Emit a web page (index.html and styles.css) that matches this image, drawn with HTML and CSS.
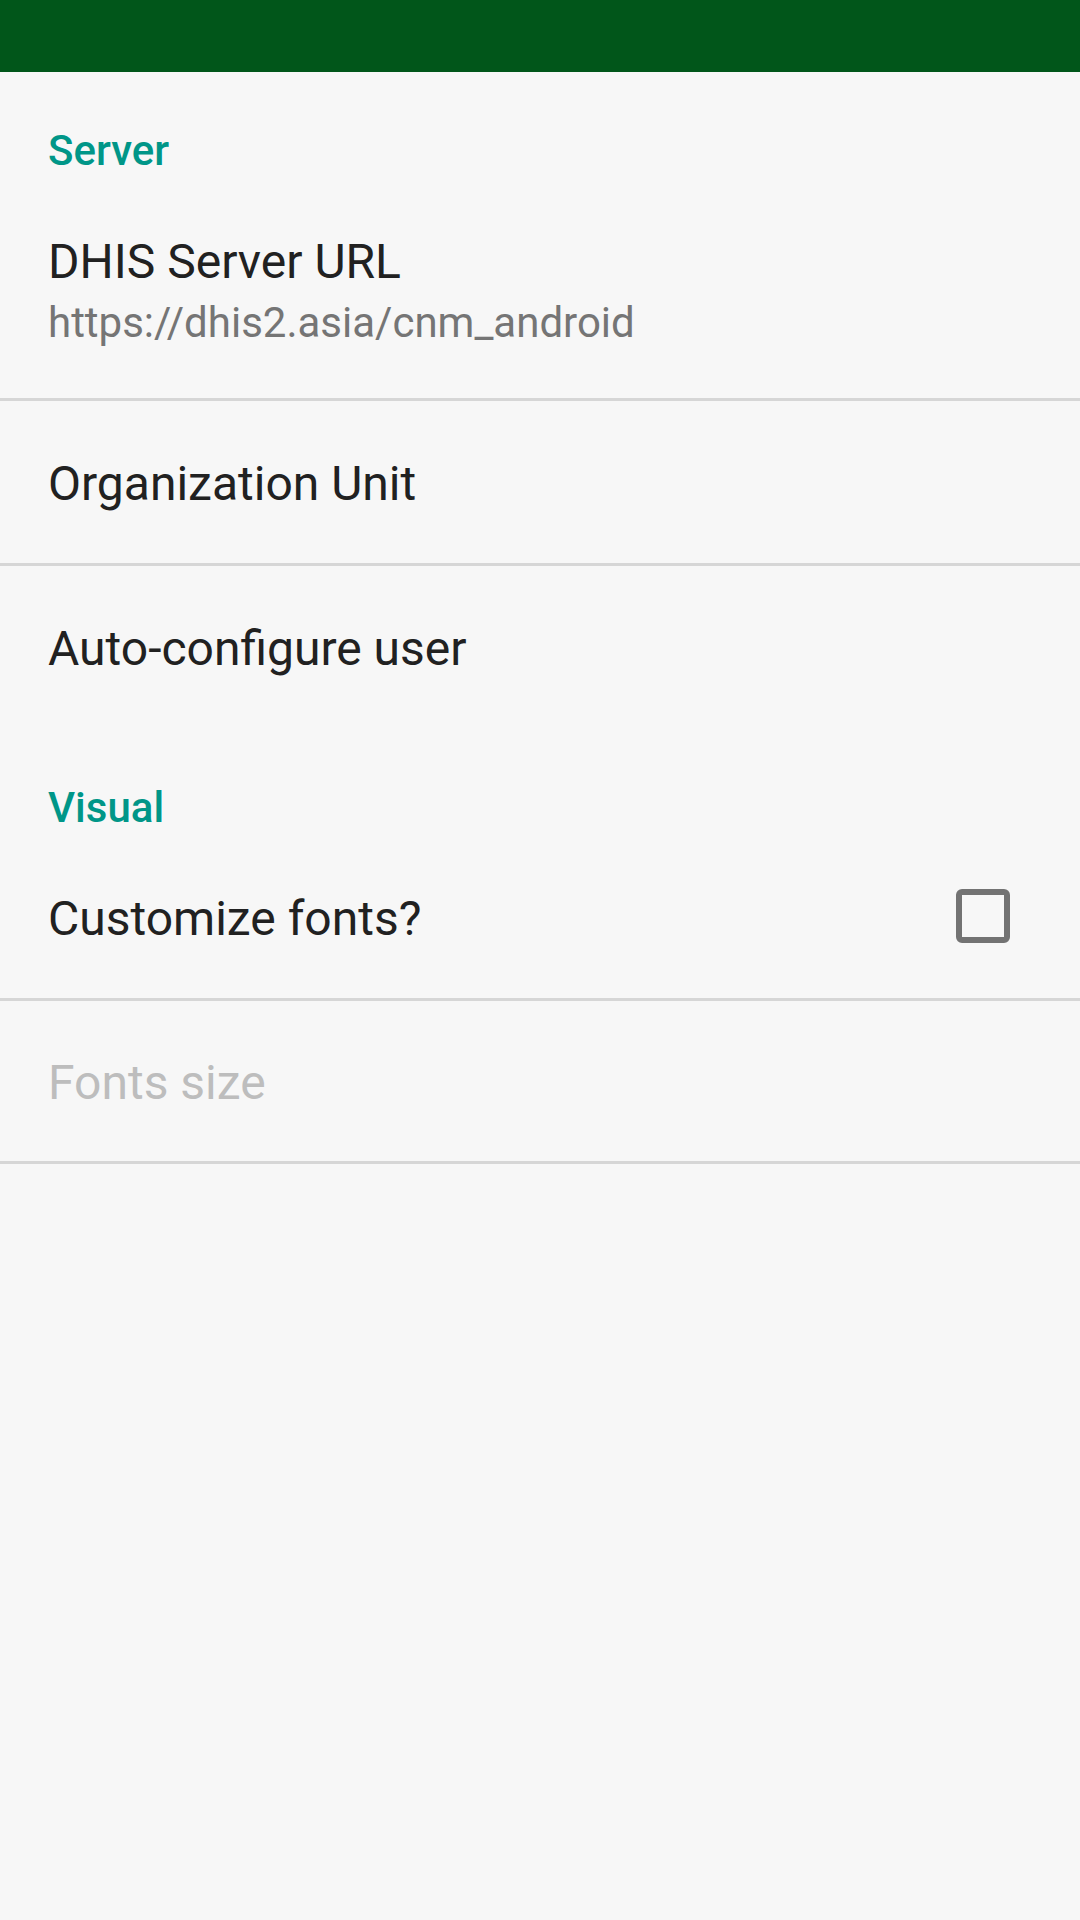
FILE: index.html
```html
<!DOCTYPE html>
<html lang="en">
<head>
<meta charset="utf-8">
<title>Settings</title>
<link rel="stylesheet" href="styles.css">
</head>
<body>
<div class="statusbar"></div>
<main class="prefs">
  <section class="category">
    <h2 class="category-title">Server</h2>
    <div class="pref divided with-summary">
      <div class="pref-text">
        <div class="pref-title">DHIS Server URL</div>
        <div class="pref-summary">https://dhis2.asia/cnm_android</div>
      </div>
    </div>
    <div class="pref divided">
      <div class="pref-text">
        <div class="pref-title">Organization Unit</div>
      </div>
    </div>
    <div class="pref last">
      <div class="pref-text">
        <div class="pref-title">Auto-configure user</div>
      </div>
    </div>
  </section>
  <section class="category">
    <h2 class="category-title">Visual</h2>
    <div class="pref divided">
      <div class="pref-text">
        <div class="pref-title">Customize fonts?</div>
      </div>
      <span class="checkbox"></span>
    </div>
    <div class="pref divided tight">
      <div class="pref-text">
        <div class="pref-title disabled">Fonts size</div>
      </div>
    </div>
  </section>
</main>
</body>
</html>
```
FILE: styles.css
```css
html, body {
  margin: 0;
  padding: 0;
}
body {
  width: 1080px;
  height: 1920px;
  background: #f7f7f7;
  font-family: Roboto, "Noto Sans", sans-serif;
  overflow: hidden;
}
.statusbar {
  height: 72px;
  background: #01561a;
}
.prefs {
  display: flex;
  flex-direction: column;
}
.category {
  display: flex;
  flex-direction: column;
}
.category-title {
  margin: 0;
  padding: 51px 48px 0;
  font-size: 42px;
  line-height: 56px;
  font-weight: 500;
  color: #009688;
}
.pref {
  display: flex;
  align-items: center;
  padding: 51px 70px 47px 48px;
}
.pref.divided {
  border-bottom: 3px solid #d6d6d6;
}
.pref.with-summary {
  padding-bottom: 46px;
}
.pref.last {
  padding-bottom: 48px;
}
.pref.tight {
  padding-top: 50px;
  padding-bottom: 46px;
}
.pref-text {
  flex: 1;
  display: flex;
  flex-direction: column;
}
.pref-title {
  font-size: 48px;
  line-height: 64px;
  color: #212121;
}
.pref-title.disabled {
  color: #bdbdbd;
}
.pref-summary {
  font-size: 42px;
  line-height: 58px;
  color: #757575;
}
.checkbox {
  width: 42px;
  height: 42px;
  margin-bottom: 6px;
  border: 6px solid #737373;
  border-radius: 6px;
}
```
